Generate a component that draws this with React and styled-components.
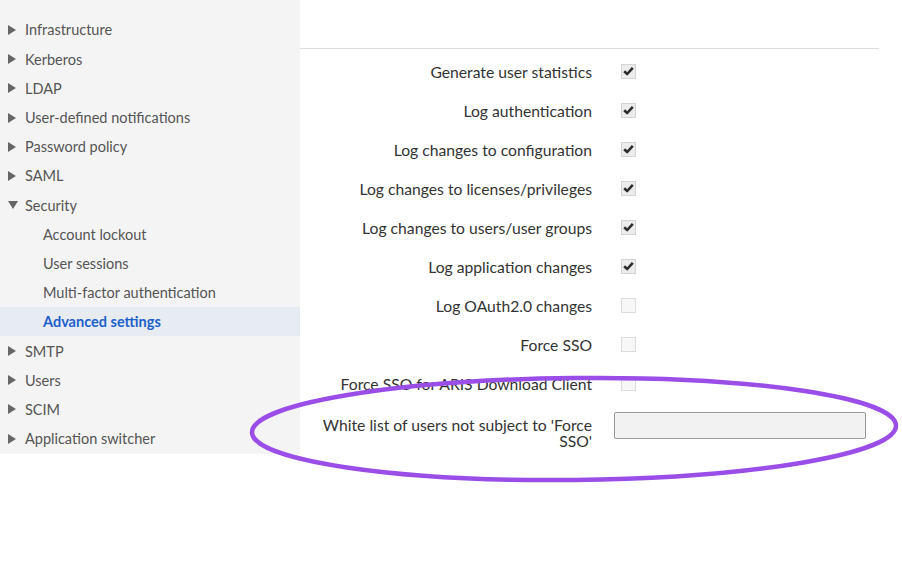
import React from "react";
import styled, { createGlobalStyle } from "styled-components";

const Global = createGlobalStyle`
  html, body { margin: 0; padding: 0; background: #fff; }
  body { font-family: Lato, "Open Sans", sans-serif; }
  * { box-sizing: border-box; }
`;

const Page = styled.div`
  position: relative;
  width: 902px;
  height: 586px;
  display: flex;
  align-items: flex-start;
  background: #fff;
  overflow: hidden;
`;

const Sidebar = styled.nav`
  width: 300px;
  flex: none;
  background: #f4f4f4;
  padding-top: 15.4px;
  padding-bottom: 0.6px;
`;

const NavItem = styled.div`
  height: 29.2px;
  display: flex;
  align-items: center;
  padding-left: ${(p) => (p.$sub ? 43 : 8)}px;
  font-size: 14.5px;
  color: ${(p) => (p.$active ? "#1d5fcb" : "#555")};
  font-weight: ${(p) => (p.$active ? 700 : 400)};
  background: ${(p) => (p.$active ? "#e7ebf2" : "transparent")};
`;

const Arrow = styled.span`
  width: 17px;
  flex: none;
  display: flex;
  align-items: center;
  svg { display: block; }
`;

const Main = styled.main`
  flex: 1;
  padding-right: 23px;
`;

const Header = styled.div`
  height: 49px;
  border-bottom: 1px solid #dedede;
`;

const Form = styled.div`
  padding-top: 3.5px;
`;

const Row = styled.div`
  display: grid;
  grid-template-columns: 292px 1fr;
  align-items: ${(p) => (p.$tall ? "start" : "center")};
  min-height: ${(p) => (p.$tall ? 44 : 39)}px;
`;

const Label = styled.div`
  padding-left: 16px;
  padding-top: ${(p) => (p.$tall ? 13.5 : 0)}px;
  text-align: right;
  font-size: 15.7px;
  line-height: 16px;
  color: #333;
`;

const Control = styled.div`
  padding-left: 22px;
  padding-top: ${(p) => (p.$tall ? 8.5 : 0)}px;
  display: flex;
  align-items: center;
`;

const Box = styled.span`
  width: 15px;
  height: 15px;
  margin-left: 7px;
  margin-top: -2px;
  border: 1px solid ${(p) => (p.$checked ? "#d4d4d4" : "#dcdcdc")};
  background: ${(p) => (p.$checked ? "#ececec" : "#f7f7f7")};
  display: flex;
  align-items: center;
  justify-content: center;
`;

const TextInput = styled.input`
  width: 252px;
  height: 27px;
  border: 1px solid #9a9a9a;
  border-radius: 2px;
  background: #f2f2f2;
  outline: none;
`;

const Overlay = styled.svg`
  position: absolute;
  left: 0;
  top: 0;
  pointer-events: none;
`;

const RightArrow = () => (
  <svg width="8" height="10" viewBox="0 0 8 10">
    <path d="M0 0 L8 5 L0 10 Z" fill="#666" />
  </svg>
);
const DownArrow = () => (
  <svg width="10" height="8" viewBox="0 0 10 8">
    <path d="M0 0 L10 0 L5 8 Z" fill="#666" />
  </svg>
);

const Check = () => (
  <svg width="11" height="10" viewBox="0 0 11 10">
    <path d="M1.2 5.2 L4.2 8 L9.8 1.8" fill="none" stroke="#2d2d2d" strokeWidth="2.6" strokeLinejoin="round" />
  </svg>
);

const nav = [
  { t: "Infrastructure" },
  { t: "Kerberos" },
  { t: "LDAP" },
  { t: "User-defined notifications" },
  { t: "Password policy" },
  { t: "SAML" },
  { t: "Security", open: true },
  { t: "Account lockout", sub: true },
  { t: "User sessions", sub: true },
  { t: "Multi-factor authentication", sub: true },
  { t: "Advanced settings", sub: true, active: true },
  { t: "SMTP" },
  { t: "Users" },
  { t: "SCIM" },
  { t: "Application switcher" },
];

const settings = [
  ["Generate user statistics", true],
  ["Log authentication", true],
  ["Log changes to configuration", true],
  ["Log changes to licenses/privileges", true],
  ["Log changes to users/user groups", true],
  ["Log application changes", true],
  ["Log OAuth2.0 changes", false],
  ["Force SSO", false],
  ["Force SSO for ARIS Download Client", false],
];

export default function App() {
  return (
    <>
      <Global />
      <Page>
        <Sidebar>
          {nav.map((n) => (
            <NavItem key={n.t} $sub={n.sub} $active={n.active}>
              {!n.sub && <Arrow>{n.open ? <DownArrow /> : <RightArrow />}</Arrow>}
              {n.t}
            </NavItem>
          ))}
        </Sidebar>
        <Main>
          <Header />
          <Form>
            {settings.map(([t, c]) => (
              <Row key={t}>
                <Label>{t}</Label>
                <Control>
                  <Box $checked={c}>{c && <Check />}</Box>
                </Control>
              </Row>
            ))}
            <Row $tall>
              <Label $tall>White list of users not subject to 'Force SSO'</Label>
              <Control $tall>
                <TextInput type="text" />
              </Control>
            </Row>
          </Form>
        </Main>
        <Overlay width="902" height="586" viewBox="0 0 902 586">
          <ellipse cx="574" cy="429" rx="322" ry="51" fill="none" stroke="#9b4de8" strokeWidth="4.5" transform="rotate(-0.6 574 429)" />
        </Overlay>
      </Page>
    </>
  );
}
